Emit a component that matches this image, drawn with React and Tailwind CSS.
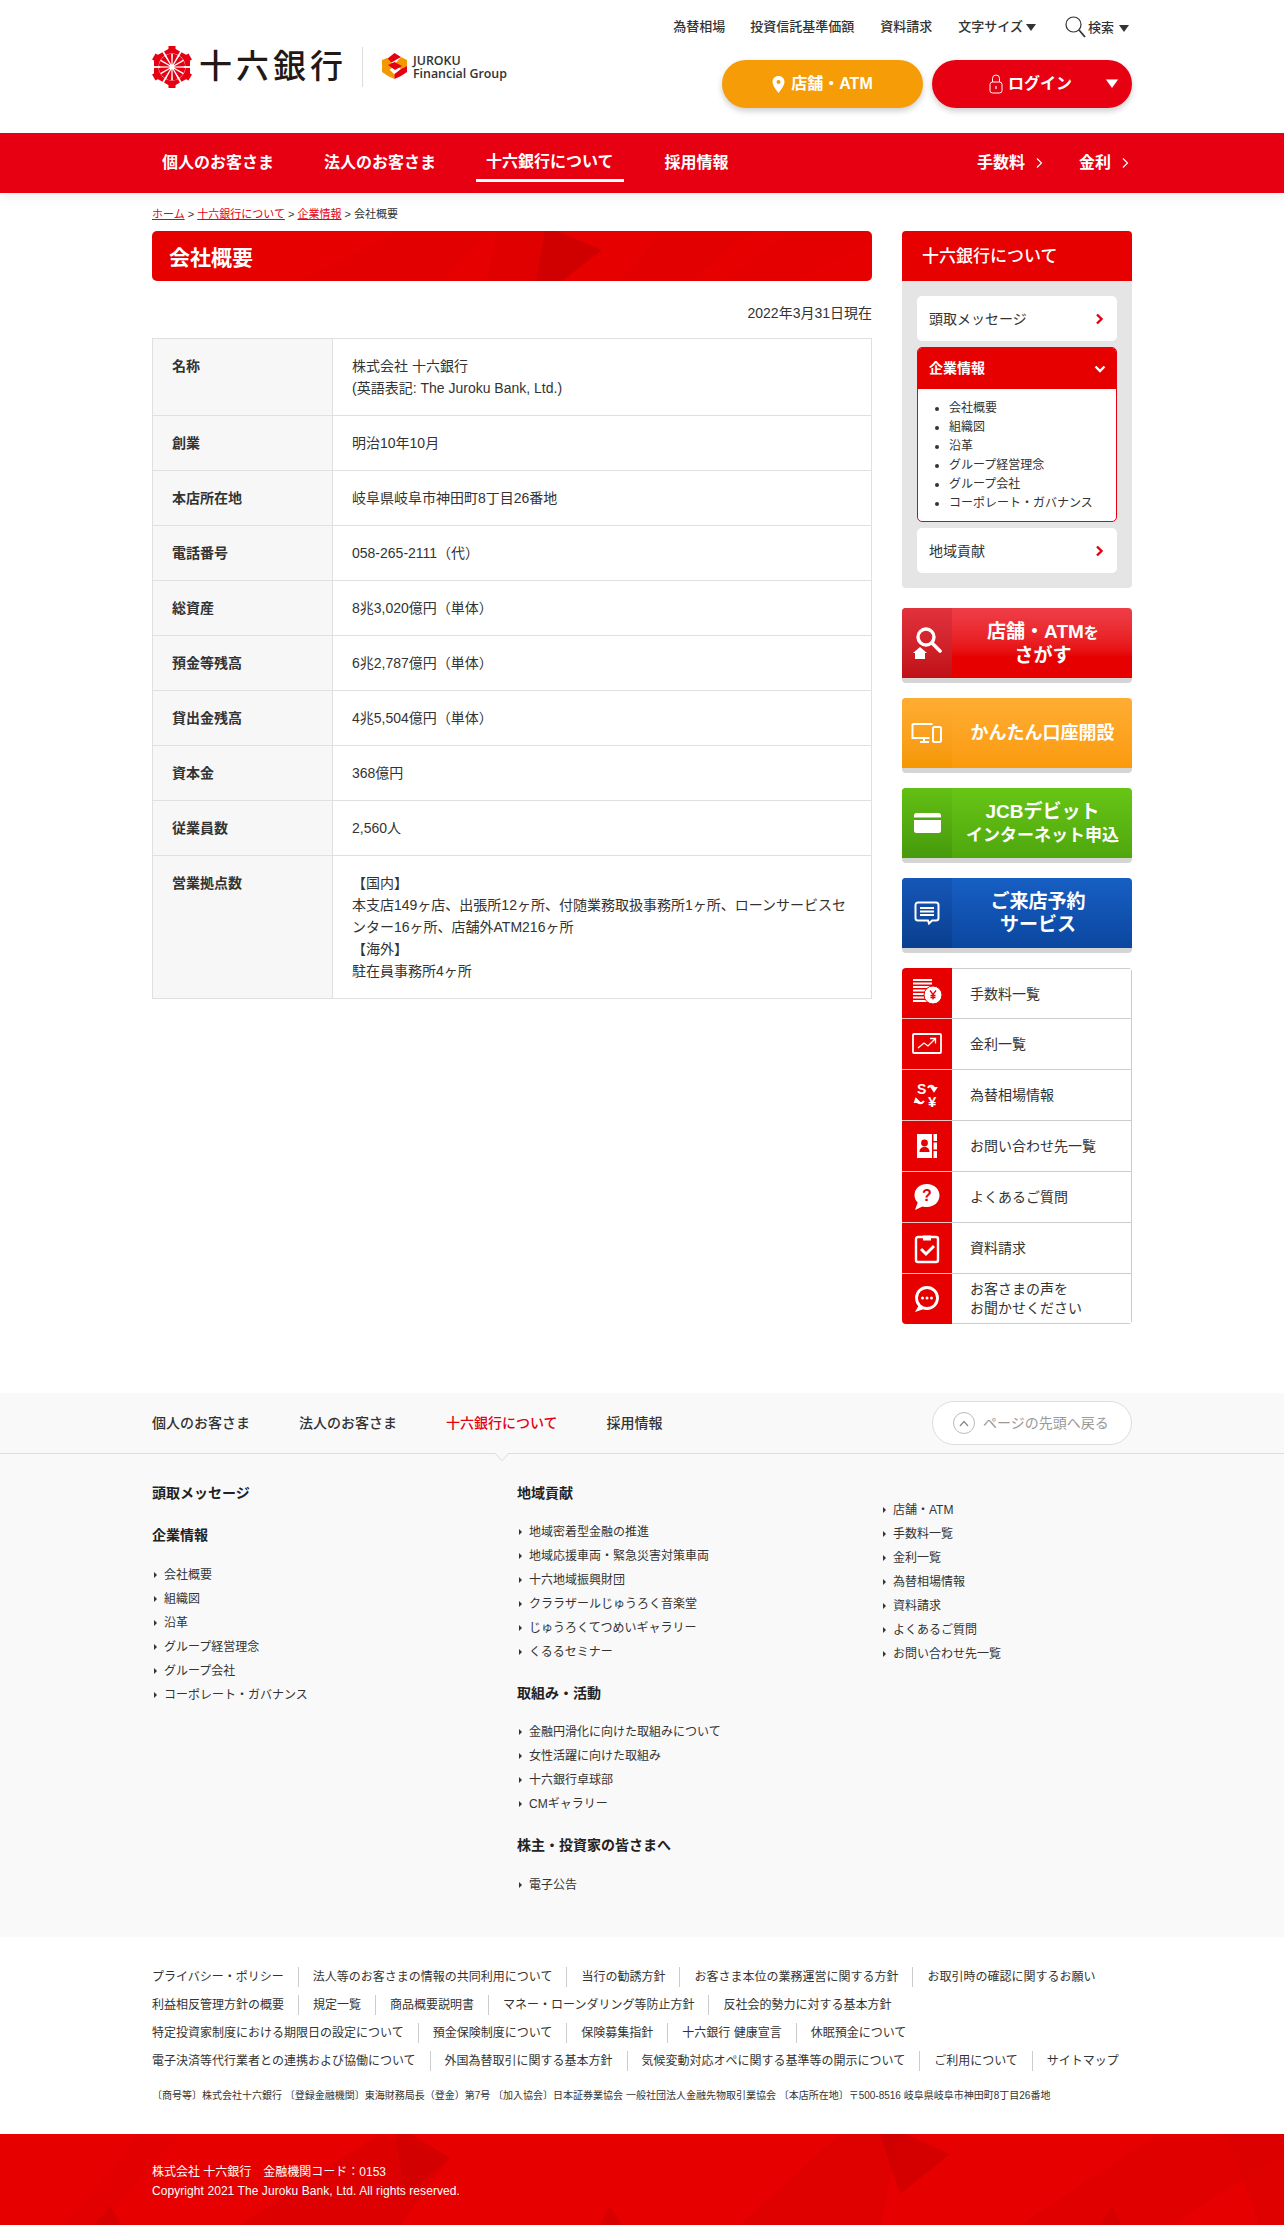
import React from "react";

const FONT = { fontFamily: '"Liberation Sans","Noto Sans CJK JP",sans-serif' };

function Emblem() {
  const spokes = Array.from({ length: 12 }, (_, i) => i * 30 + 15);
  const lobes = [0, 60, 120, 180, 240, 300];
  return (
    <svg width="40" height="42" viewBox="-20 -21 40 42" className="shrink-0">
      <polygon points="0,-20 18,-10 18,10 0,20 -18,10 -18,-10" fill="#e60012" />
      {lobes.map((a) => (
        <rect key={a} x="-3.5" y="-21" width="7" height="7" fill="#e60012" transform={`rotate(${a})`} />
      ))}
      <circle r="13.5" fill="#fff" />
      {spokes.map((a) => (
        <path key={a} d="M0,-2 L-2.6,-13 A13,13 0 0 1 2.6,-13 Z" fill="#e60012" transform={`rotate(${a})`} />
      ))}
      {lobes.map((a) => (
        <rect key={`w${a}`} x="-0.9" y="-19" width="1.8" height="7" fill="#fff" transform={`rotate(${a + 30})`} />
      ))}
      <circle r="2.4" fill="#fff" />
    </svg>
  );
}

function GroupMark() {
  return (
    <svg width="27" height="28" viewBox="0 0 27 28" className="shrink-0">
      <path d="M13.5 1 L20 5 L6 13 L6 7 Z" fill="#e60012" />
      <path d="M20 5 L26 8 L26 14 L20 17 L13 13 Z" fill="#f39800" />
      <path d="M1 8 L6 6 L14 14 L8 18 L1 14 Z" fill="#f39800" />
      <path d="M7 13 L13.5 10 L21 14 L14 18 Z" fill="#e60012" />
      <path d="M1 14 L8 17 L14 23 L13.5 27 L7 24 L1 20 Z" fill="#f39800" />
      <path d="M26 14 L26 20 L20 24 L13.5 27 L13.5 22 L20 17 Z" fill="#e60012" />
    </svg>
  );
}

function Tri({ className = "" }) {
  return <svg width="10" height="7" viewBox="0 0 10 7" className={`shrink-0 ${className}`}><path d="M0 0H10L5 7Z" fill="currentColor" /></svg>;
}

function Chevron({ size = 8, w = 1.2, className = "" }) {
  return (
    <svg width={size} height={size * 1.5} viewBox="0 0 8 12" className={`shrink-0 ${className}`}>
      <path d="M2 1.5L6.5 6L2 10.5" fill="none" stroke="currentColor" strokeWidth={w} />
    </svg>
  );
}

function Polys() {
  return (
    <svg className="absolute inset-0 w-full h-full" viewBox="0 0 720 50" preserveAspectRatio="none" aria-hidden="true">
      <polygon points="150,50 250,0 340,0 290,50" fill="#d40000" opacity="0.22" />
      <polygon points="335,50 345,0 395,0 384,50" fill="#d40000" opacity="0.3" />
      <polygon points="393,0 405,0 450,19 410,50 384,50" fill="#cc0000" opacity="0.8" />
      <polygon points="470,50 510,0 600,0 540,50" fill="#d40000" opacity="0.15" />
      <polygon points="570,50 640,0 720,0 720,10 640,50" fill="#d40000" opacity="0.12" />
    </svg>
  );
}

function FooterPolys() {
  return (
    <svg className="absolute inset-0 w-full h-full" viewBox="0 0 1284 91" preserveAspectRatio="none" aria-hidden="true">
      <polygon points="60,91 125,20 135,0 180,0 100,91" fill="#d40000" opacity="0.2" />
      <polygon points="240,91 380,0 450,24 400,91" fill="#d20000" opacity="0.45" />
      <polygon points="395,0 410,0 450,24 405,60" fill="#c80000" opacity="0.55" />
      <polygon points="95,91 110,72 122,91" fill="#c80000" opacity="0.5" />
      <polygon points="600,91 610,72 622,91" fill="#c80000" opacity="0.5" />
      <polygon points="1100,91 1112,72 1122,91" fill="#c80000" opacity="0.5" />
      <polygon points="740,91 840,0 900,0 880,91" fill="#d40000" opacity="0.4" />
      <polygon points="880,0 905,0 950,20 900,60" fill="#c80000" opacity="0.6" />
      <polygon points="1020,91 1160,0 1284,0 1284,20 1170,91" fill="#d40000" opacity="0.25" />
      <polygon points="1225,0 1284,0 1284,91 1260,91" fill="#d40000" opacity="0.4" />
    </svg>
  );
}

const TABLE = [
  ["名称", ["株式会社 十六銀行", "(英語表記: The Juroku Bank, Ltd.)"]],
  ["創業", ["明治10年10月"]],
  ["本店所在地", ["岐阜県岐阜市神田町8丁目26番地"]],
  ["電話番号", ["058-265-2111（代）"]],
  ["総資産", ["8兆3,020億円（単体）"]],
  ["預金等残高", ["6兆2,787億円（単体）"]],
  ["貸出金残高", ["4兆5,504億円（単体）"]],
  ["資本金", ["368億円"]],
  ["従業員数", ["2,560人"]],
  ["営業拠点数", ["【国内】", "本支店149ヶ店、出張所12ヶ所、付随業務取扱事務所1ヶ所、ローンサービスセンター16ヶ所、店舗外ATM216ヶ所", "【海外】", "駐在員事務所4ヶ所"]],
];

function Header() {
  return (
    <header className="w-[980px] mx-auto h-[133px] flex justify-between bg-white">
      <div className="flex items-start pt-[46px]">
        <Emblem />
        <span className="ml-[7px] text-[33px] leading-[42px] font-medium tracking-[4px] text-[#231815] whitespace-nowrap">十六銀行</span>
        <div className="ml-[15px] mt-[1px] w-px h-[40px] bg-[#ddd]" />
        <div className="ml-[18px] mt-[6px]"><GroupMark /></div>
        <div className="ml-[5px] mt-[8px] text-[12.4px] leading-[13px] font-semibold text-[#333] whitespace-nowrap" style={{ fontFamily: '"Open Sans",sans-serif' }}>
          <div>JUROKU</div>
          <div>Financial Group</div>
        </div>
      </div>
      <div className="flex flex-col items-end">
        <div className="h-[60px] flex items-start pt-[17px] text-[13px] leading-[20px] font-medium text-[#333]">
          <a className="mr-[25px]">為替相場</a>
          <a className="mr-[26px]">投資信託基準価額</a>
          <a className="mr-[26px]">資料請求</a>
          <a className="flex items-center mr-[28px]">文字サイズ<Tri className="ml-[3px]" /></a>
          <a className="flex items-center mr-[3px]">
            <svg width="24" height="24" viewBox="0 0 24 24" className="-mt-[2px]"><circle cx="9.5" cy="9.5" r="7.5" fill="none" stroke="#333" strokeWidth="1.2" /><path d="M15 15L21 22" stroke="#333" strokeWidth="1.8" /></svg>
            検索<Tri className="ml-[5px]" />
          </a>
        </div>
        <div className="flex gap-[9px]">
          <a className="w-[201px] h-[48px] rounded-[24px] bg-[#f59c07] shadow-[0_3px_6px_rgba(0,0,0,0.2)] flex items-center justify-center text-white text-[16px] font-bold">
            <svg width="13" height="17" viewBox="0 0 13 17" className="mr-[6px]"><path fillRule="evenodd" d="M6.5 0C3 0 .5 2.6.5 6c0 4 6 11 6 11s6-7 6-11c0-3.400-2.500-6-6-6zm0 4a2 2 0 110 4 2 2 0 010-4z" fill="#fff" /></svg>
            店舗・ATM
          </a>
          <a className="relative w-[200px] h-[48px] rounded-[24px] bg-[#e60012] shadow-[0_3px_6px_rgba(0,0,0,0.2)] flex items-center justify-center text-white text-[16px] font-bold">
            <svg width="14" height="20" viewBox="0 0 14 20" className="mr-[5px] -ml-[3px]"><rect x="1" y="8" width="12" height="11" rx="2.5" fill="none" stroke="#fff" strokeWidth="1" /><path d="M3.500 8V4.500a3.500 3.500 0 017 0V8" fill="none" stroke="#fff" strokeWidth="1" /><path d="M7 12v3" stroke="#fff" strokeWidth="1.2" /></svg>
            ログイン
            <Tri className="absolute right-[15px] top-[20px] scale-125" />
          </a>
        </div>
      </div>
    </header>
  );
}

function MainNav() {
  const items = ["個人のお客さま", "法人のお客さま", "十六銀行について", "採用情報"];
  return (
    <nav className="relative z-10 h-[60px] bg-[#e60012] shadow-[0_4px_10px_rgba(0,0,0,0.08)]">
      <div className="w-[980px] mx-auto h-full flex justify-between text-white text-[16px] font-bold">
        <div className="flex gap-[30px]">
          {items.map((t, i) => (
            <a key={t} className={`h-[49px] px-[10px] pt-[11px] flex items-center ${i === 3 ? "ml-px" : ""} ${i === 2 ? "border-b-[3px] border-white" : ""}`}>{t}</a>
          ))}
        </div>
        <div className="flex items-center pr-[3px]">
          <a className="flex items-center gap-[10px] mr-[36px]">手数料<Chevron /></a>
          <a className="flex items-center gap-[10px]">金利<Chevron /></a>
        </div>
      </div>
    </nav>
  );
}

function CompanyTable() {
  return (
    <div className="mt-[14px] border-t border-l border-r border-[#e0e0e0] text-[14px] leading-[22px] text-[#333]">
      {TABLE.map(([k, v]) => (
        <div key={k} className="flex border-b border-[#e0e0e0]">
          <div className="w-[180px] shrink-0 bg-[#f7f7f7] px-[19px] py-[16px] font-bold border-r border-[#e0e0e0]">{k}</div>
          <div className="flex-1 px-[19px] py-[16px]">
            {v.map((l) => <div key={l}>{l}</div>)}
          </div>
        </div>
      ))}
    </div>
  );
}

function IconSearchHome() {
  return (
    <svg width="30" height="34" viewBox="0 0 30 34">
      <circle cx="14" cy="11" r="8" fill="none" stroke="#fff" strokeWidth="3.400" />
      <path d="M20 17L28 25" stroke="#fff" strokeWidth="3.600" strokeLinecap="round" />
      <path d="M1 27L8 21L15 27L13 27V33H3V27Z" fill="#fff" />
    </svg>
  );
}
function IconDevices() {
  return (
    <svg width="32" height="22" viewBox="0 0 32 22">
      <path d="M1.500 2h20M1.500 2v14h17" fill="none" stroke="#fff" strokeWidth="2" />
      <path d="M9 20h9M13 16v4" stroke="#fff" strokeWidth="2" />
      <rect x="22" y="5" width="8" height="15" rx="1.500" fill="none" stroke="#fff" strokeWidth="2" />
    </svg>
  );
}
function IconCard() {
  return (
    <svg width="27" height="20" viewBox="0 0 27 20">
      <rect width="27" height="20" rx="2.500" fill="#fff" />
      <rect y="4.500" width="27" height="2.500" fill="#4fa70e" />
    </svg>
  );
}
function IconChat() {
  return (
    <svg width="26" height="24" viewBox="0 0 26 24">
      <path d="M4 1.500h18a2.500 2.500 0 012.500 2.500v13a2.500 2.500 0 01-2.500 2.500h-4l-3 3-1-3H4a2.500 2.500 0 01-2.500-2.500V4A2.500 2.500 0 014 1.500z" fill="none" stroke="#fff" strokeWidth="2" />
      <path d="M6 7h14M6 10.500h14M6 14h14" stroke="#fff" strokeWidth="1.800" />
    </svg>
  );
}

const BANNERS = [
  { lines: [<>店舗・ATM<span className="text-[15px]">を</span></>, "さがす"], main: "bg-gradient-to-b from-[#ef3d47] to-[#e60000] to-70%", left: "bg-gradient-to-b from-[#e2323c] to-[#c00f17]", icon: <IconSearchHome />, size: "text-[19px]", pad: "pl-[2px]" },
  { lines: ["かんたん口座開設"], main: "bg-gradient-to-b from-[#ffad32] to-[#fb9a09]", left: "bg-gradient-to-b from-[#ffad32] to-[#f59700]", icon: <IconDevices />, size: "text-[18px]", pad: "pl-[1px]" },
  { lines: [<span className="text-[19px]">JCBデビット</span>, "インターネット申込"], main: "bg-gradient-to-b from-[#67c515] to-[#4fa70e]", left: "bg-gradient-to-b from-[#63bf14] to-[#479a0c]", icon: <IconCard />, size: "text-[17px]", pad: "pl-[1px]" },
  { lines: ["ご来店予約", "サービス"], main: "bg-gradient-to-b from-[#175fc4] to-[#0b479f]", left: "bg-gradient-to-b from-[#1557b7] to-[#0a3f8f]", icon: <IconChat />, size: "text-[19px]", pad: "pr-[8px]" },
];

function Ic({ children }) {
  return <svg width="36" height="32" viewBox="0 0 36 32">{children}</svg>;
}

const LIST = [
  ["手数料一覧", <Ic><path d="M4 3h19M4 6.500h19M4 10h19M4 13.500h13M4 17h13M4 20.500h13M4 24h15" stroke="#fff" strokeWidth="2.200" /><circle cx="24" cy="18" r="9" fill="#fff" stroke="#e60000" strokeWidth="1" /><path d="M21 13.500l3 4 3-4M24 17.500v5M21.500 18.500h5M21.500 20.500h5" stroke="#e60000" strokeWidth="1.300" fill="none" /></Ic>],
  ["金利一覧", <Ic><rect x="4" y="6" width="28" height="19" rx="1" fill="none" stroke="#fff" strokeWidth="1.800" /><path d="M9 20l6-5 4 3 7-7M21 10.500h5.500v5" fill="none" stroke="#fff" strokeWidth="1.300" /></Ic>],
  ["為替相場情報", <Ic><text x="8" y="15" fill="#fff" fontSize="14" fontWeight="700" fontFamily="Liberation Sans">S</text><text x="19" y="28" fill="#fff" fontSize="15" fontWeight="700" fontFamily="Liberation Sans">¥</text><path d="M19 9c1-3 5-3 6 0M23 9h4l-2 3zM8 22c1 3 5 3 7 0M7 20l3 3h-4z" fill="none" stroke="#fff" strokeWidth="2" /></Ic>],
  ["お問い合わせ先一覧", <Ic><path d="M8 4h15v24H8z" fill="#fff" /><path d="M24.500 4h3.500v7h-3.500zM24.500 12.500h3.500v7h-3.500zM24.500 21h3.500v7h-3.500z" fill="#fff" /><circle cx="15.500" cy="13" r="3.400" fill="#e60000" /><path d="M10.500 22c0-3.500 2-5 5-5s5 1.500 5 5z" fill="#e60000" /></Ic>],
  ["よくあるご質問", <Ic><path d="M18 3C11 3 5.500 7.500 5.500 14c0 3 1.200 5.600 3.200 7.500L6 29l7.500-3.500c1.400.4 2.900.6 4.500.6 7 0 12.500-5 12.500-11.500S25 3 18 3z" fill="#fff" /><text x="18" y="20" textAnchor="middle" fill="#e60000" fontSize="16" fontWeight="700" fontFamily="Liberation Sans">?</text></Ic>],
  ["資料請求", <Ic><rect x="7" y="5" width="22" height="25" rx="2" fill="none" stroke="#fff" strokeWidth="2.400" /><path d="M14 3.500h8v5h-8z" fill="#fff" /><path d="M12 17l5 5 8-8" fill="none" stroke="#fff" strokeWidth="3" /></Ic>],
  [["お客さまの声を", "お聞かせください"], <Ic><circle cx="18" cy="15" r="10.500" fill="none" stroke="#fff" strokeWidth="2.800" /><path d="M10 22L6 29l9-3" fill="#fff" /><circle cx="13.500" cy="15" r="1.500" fill="#fff" /><circle cx="18" cy="15" r="1.500" fill="#fff" /><circle cx="22.500" cy="15" r="1.500" fill="#fff" /></Ic>],
];

function Sidebar() {
  return (
    <aside className="w-[230px] shrink-0">
      <div className="rounded-[4px] overflow-hidden bg-[#e5e5e5]">
        <div className="h-[50px] bg-[#e60000] flex items-center pl-[20px] pt-[2px] text-[17px] font-medium text-white">十六銀行について</div>
        <div className="px-[15px] pt-[15px] pb-[15px] flex flex-col gap-[6px]">
          <a className="h-[45px] rounded-[5px] bg-white flex items-center justify-between pl-[12px] pr-[14px] pt-[1px] text-[14px] text-[#333]">頭取メッセージ<Chevron size={8} w={2.4} className="text-[#e60012]" /></a>
          <div className="rounded-[5px] border border-[#e60012] bg-white overflow-hidden">
            <div className="h-[42px] -mx-px -mt-px bg-[#e60000] flex items-center justify-between pl-[12px] pr-[11px] pt-[1px] text-[14px] font-bold text-white">
              企業情報
              <svg width="12" height="8" viewBox="0 0 12 8"><path d="M1.500 1.500L6 6l4.500-4.500" fill="none" stroke="#fff" strokeWidth="2.400" /></svg>
            </div>
            <ul className="list-disc pl-[31px] pt-[10px] pb-[8px] text-[12px] leading-[19px] text-[#333]">
              {["会社概要", "組織図", "沿革", "グループ経営理念", "グループ会社", "コーポレート・ガバナンス"].map((t) => <li key={t}>{t}</li>)}
            </ul>
          </div>
          <a className="h-[45px] rounded-[5px] bg-white flex items-center justify-between pl-[12px] pr-[14px] pt-[1px] text-[14px] text-[#333]">地域貢献<Chevron size={8} w={2.4} className="text-[#e60012]" /></a>
        </div>
      </div>
      <div className="mt-[20px] flex flex-col gap-[15px]">
        {BANNERS.map((b, i) => (
          <a key={i} className={`flex h-[75px] rounded-[4px] overflow-hidden border-b-[5px] border-[#d5d5d5] ${b.main}`}>
            <div className={`w-[50px] shrink-0 flex items-center justify-center ${b.left}`}>{b.icon}</div>
            <div className={`flex-1 flex flex-col items-center justify-center font-bold text-white leading-[23px] ${b.size} ${b.pad}`}>
              {b.lines.map((l, j) => <div key={j}>{l}</div>)}
            </div>
          </a>
        ))}
      </div>
      <div className="mt-[15px] rounded-[4px] overflow-hidden">
        {LIST.map(([t, icon], i) => (
          <a key={i} className={`flex ${i === 0 ? "h-[50px]" : "h-[51px]"}`}>
            <div className={`w-[50px] shrink-0 bg-[#e60000] flex items-center justify-center ${i > 0 ? "border-t border-[#f3c6c6]" : ""}`}>{icon}</div>
            <div className={`flex-1 flex flex-col justify-center pl-[18px] pt-[1px] text-[14px] leading-[19px] text-[#333] border-r border-t border-[#ccc] ${i === LIST.length - 1 ? "border-b" : ""}`}>
              {Array.isArray(t) ? t.map((l) => <div key={l}>{l}</div>) : t}
            </div>
          </a>
        ))}
      </div>
    </aside>
  );
}

function SmItem({ children }) {
  return (
    <li className="flex items-center h-[24px] text-[12px] text-[#333] whitespace-nowrap">
      <svg width="3" height="6" viewBox="0 0 3 6" className="ml-[2px] mr-[7px]"><path d="M0 0L3 3L0 6Z" fill="#333" /></svg>
      {children}
    </li>
  );
}

function Sitemap() {
  const nav = ["個人のお客さま", "法人のお客さま", "十六銀行について", "採用情報"];
  const Head = ({ children, className = "" }) => <div className={`text-[14px] leading-[20px] font-bold text-[#222] ${className}`}>{children}</div>;
  return (
    <section className="bg-[#f9f9f9] h-[544px]">
      <div className="border-b border-[#ddd] h-[61px]">
        <div className="w-[980px] mx-auto h-full flex items-center justify-between">
          <div className="flex gap-[49px] text-[14px] font-medium text-[#333]">
            {nav.map((t, i) => (
              <a key={t} className={`relative ${i === 2 ? "text-[#e60012]" : ""}`}>
                {t}
                {i === 2 && (
                  <svg width="14" height="8" viewBox="0 0 14 8" className="absolute left-1/2 -ml-[7px] top-[40px]"><path d="M0 0L7 8L14 0" fill="#f9f9f9" stroke="#ddd" /></svg>
                )}
              </a>
            ))}
          </div>
          <a className="w-[200px] h-[44px] rounded-[22px] border border-[#ddd] bg-white flex items-center pl-[20px] text-[14px] text-[#999]">
            <span className="w-[22px] h-[22px] rounded-full border border-[#bbb] flex items-center justify-center mr-[8px]">
              <svg width="10" height="7" viewBox="0 0 10 7"><path d="M1 6L5 1.500L9 6" fill="none" stroke="#888" strokeWidth="1.200" /></svg>
            </span>
            ページの先頭へ戻る
          </a>
        </div>
      </div>
      <div className="w-[980px] mx-auto pt-[29px] grid grid-cols-[365px_364px_251px]">
        <div>
          <Head>頭取メッセージ</Head>
          <Head className="mt-[22px]">企業情報</Head>
          <ul className="mt-[18px]">
            {["会社概要", "組織図", "沿革", "グループ経営理念", "グループ会社", "コーポレート・ガバナンス"].map((t) => <SmItem key={t}>{t}</SmItem>)}
          </ul>
        </div>
        <div>
          <Head>地域貢献</Head>
          <ul className="mt-[17px]">
            {["地域密着型金融の推進", "地域応援車両・緊急災害対策車両", "十六地域振興財団", "クララザールじゅうろく音楽堂", "じゅうろくてつめいギャラリー", "くるるセミナー"].map((t) => <SmItem key={t}>{t}</SmItem>)}
          </ul>
          <Head className="mt-[19px]">取組み・活動</Head>
          <ul className="mt-[17px]">
            {["金融円滑化に向けた取組みについて", "女性活躍に向けた取組み", "十六銀行卓球部", "CMギャラリー"].map((t) => <SmItem key={t}>{t}</SmItem>)}
          </ul>
          <Head className="mt-[19px]">株主・投資家の皆さまへ</Head>
          <ul className="mt-[18px]">
            <SmItem>電子公告</SmItem>
          </ul>
        </div>
        <ul className="mt-[15px]">
          {["店舗・ATM", "手数料一覧", "金利一覧", "為替相場情報", "資料請求", "よくあるご質問", "お問い合わせ先一覧"].map((t) => <SmItem key={t}>{t}</SmItem>)}
        </ul>
      </div>
    </section>
  );
}

const LINKS = [
  ["プライバシー・ポリシー", "法人等のお客さまの情報の共同利用について", "当行の勧誘方針", "お客さま本位の業務運営に関する方針", "お取引時の確認に関するお願い"],
  ["利益相反管理方針の概要", "規定一覧", "商品概要説明書", "マネー・ローンダリング等防止方針", "反社会的勢力に対する基本方針"],
  ["特定投資家制度における期限日の設定について", "預金保険制度について", "保険募集指針", "十六銀行 健康宣言", "休眠預金について"],
  ["電子決済等代行業者との連携および協働について", "外国為替取引に関する基本方針", "気候変動対応オペに関する基準等の開示について", "ご利用について", "サイトマップ"],
];

function BottomLinks() {
  return (
    <section className="h-[197px] bg-white pt-[26px]">
      <div className="w-[980px] mx-auto">
        {LINKS.map((row, i) => (
          <div key={i} className="h-[28px] flex items-center text-[12px] text-[#333] whitespace-nowrap">
            {row.map((t, j) => (
              <a key={t} className={`leading-[20px] ${j > 0 ? "border-l border-[#ccc] pl-[14px]" : ""} ${j < row.length - 1 ? "pr-[14px]" : ""}`}>{t}</a>
            ))}
          </div>
        ))}
        <p className="mt-[13px] text-[10px] leading-[16px] text-[#333] whitespace-nowrap">〔商号等〕株式会社十六銀行 〔登録金融機関〕東海財務局長（登金）第7号 〔加入協会〕日本証券業協会 一般社団法人金融先物取引業協会 〔本店所在地〕〒500-8516 岐阜県岐阜市神田町8丁目26番地</p>
      </div>
    </section>
  );
}

function Footer() {
  return (
    <footer className="relative h-[91px] bg-[#e60000] overflow-hidden">
      <FooterPolys />
      <div className="relative w-[980px] mx-auto pt-[29px] text-[12px] leading-[19px] text-white">
        <div>株式会社 十六銀行　金融機関コード：0153</div>
        <div className="tracking-[0.07px]">Copyright 2021 The Juroku Bank, Ltd. All rights reserved.</div>
      </div>
    </footer>
  );
}

export default function App() {
  return (
    <div className="bg-white w-full" style={FONT}>
      <Header />
      <MainNav />
      <main className="w-[980px] mx-auto h-[1200px] flex justify-between">
        <div className="w-[720px]">
          <div className="h-[38px] pt-[13px] text-[11px] leading-[16px] text-[#333] whitespace-nowrap">
            <a className="text-[#e60012] underline">ホーム</a> &gt; <a className="text-[#e60012] underline">十六銀行について</a> &gt; <a className="text-[#e60012] underline">企業情報</a> &gt; 会社概要
          </div>
          <h1 className="relative h-[50px] rounded-[5px] overflow-hidden bg-[#e60000] flex items-center pl-[17px] pt-[3px] text-[21px] font-bold text-white">
            <Polys />
            <span className="relative">会社概要</span>
          </h1>
          <p className="mt-[21px] text-right text-[14px] leading-[22px] text-[#333]">2022年3月31日現在</p>
          <CompanyTable />
        </div>
        <div className="pt-[38px]">
          <Sidebar />
        </div>
      </main>
      <Sitemap />
      <BottomLinks />
      <Footer />
    </div>
  );
}
